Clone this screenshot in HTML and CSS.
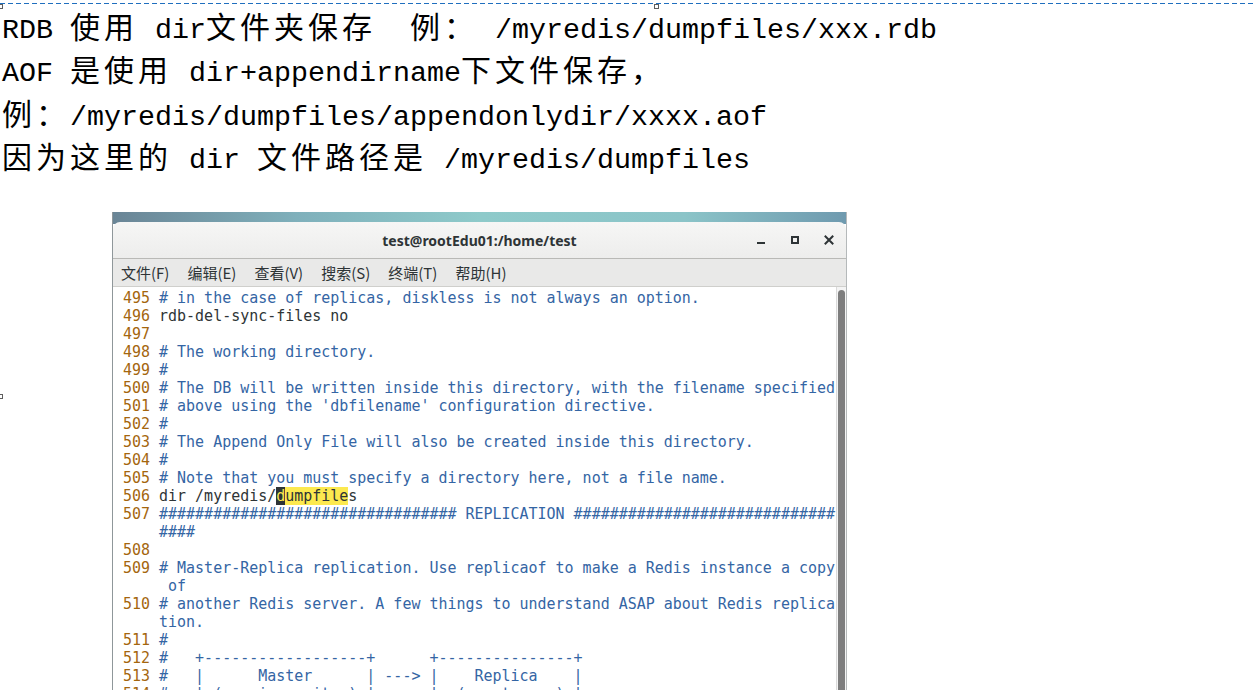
FILE: index.html
```html
<!DOCTYPE html>
<html lang="zh-CN">
<head>
<meta charset="utf-8">
<title>RDB / AOF dir</title>
<link rel="stylesheet" href="styles.css">
</head>
<body>
<div class="page">
  <div class="frame-line"></div>
  <span class="handle h-tl"></span>
  <span class="handle h-tm"></span>
  <span class="handle h-ml"></span>

  <div class="notes">
    <p>RDB <span class="cj">使用</span> dir<span class="cj">文件夹保存</span>  <span class="cj">例：</span> /myredis/dumpfiles/xxx.rdb</p>
    <p>AOF <span class="cj">是使用</span> dir+appendirname<span class="cj">下文件保存，</span></p>
    <p><span class="cj">例：</span>/myredis/dumpfiles/appendonlydir/xxxx.aof</p>
    <p><span class="cj">因为这里的</span> dir <span class="cj">文件路径是</span> /myredis/dumpfiles</p>
  </div>

  <div class="win">
    <div class="titlebar">
      <div></div>
      <div class="title">test@rootEdu01:/home/test</div>
      <div class="controls">
        <span class="ctl"><svg width="16" height="16" viewBox="0 0 16 16"><rect x="4" y="10" width="8" height="2" fill="#2e3436"/></svg></span>
        <span class="ctl"><svg width="16" height="16" viewBox="0 0 16 16"><rect x="5" y="5" width="6" height="6" fill="none" stroke="#2e3436" stroke-width="2"/></svg></span>
        <span class="ctl"><svg width="16" height="16" viewBox="0 0 16 16"><path d="M4.5 4.5 L11.5 11.5 M11.5 4.5 L4.5 11.5" stroke="#2e3436" stroke-width="2" stroke-linecap="square"/></svg></span>
      </div>
    </div>
    <div class="menubar">
      <span class="mi">文件(F)</span>
      <span class="mi">编辑(E)</span>
      <span class="mi">查看(V)</span>
      <span class="mi">搜索(S)</span>
      <span class="mi">终端(T)</span>
      <span class="mi">帮助(H)</span>
    </div>
    <div class="term">
      <div class="screen">
        <div class="row"><span class="ln">495 </span><span class="c"># in the case of replicas, diskless is not always an option.</span></div>
        <div class="row"><span class="ln">496 </span>rdb-del-sync-files no</div>
        <div class="row"><span class="ln">497 </span></div>
        <div class="row"><span class="ln">498 </span><span class="c"># The working directory.</span></div>
        <div class="row"><span class="ln">499 </span><span class="c">#</span></div>
        <div class="row"><span class="ln">500 </span><span class="c"># The DB will be written inside this directory, with the filename specified</span></div>
        <div class="row"><span class="ln">501 </span><span class="c"># above using the 'dbfilename' configuration directive.</span></div>
        <div class="row"><span class="ln">502 </span><span class="c">#</span></div>
        <div class="row"><span class="ln">503 </span><span class="c"># The Append Only File will also be created inside this directory.</span></div>
        <div class="row"><span class="ln">504 </span><span class="c">#</span></div>
        <div class="row"><span class="ln">505 </span><span class="c"># Note that you must specify a directory here, not a file name.</span></div>
        <div class="row"><span class="ln">506 </span>dir /myredis/<span class="cur">d</span><span class="hl">umpfile</span>s</div>
        <div class="row"><span class="ln">507 </span><span class="c">################################# REPLICATION #############################</span></div>
        <div class="row"><span class="ln">    </span><span class="c">####</span></div>
        <div class="row"><span class="ln">508 </span></div>
        <div class="row"><span class="ln">509 </span><span class="c"># Master-Replica replication. Use replicaof to make a Redis instance a copy</span></div>
        <div class="row"><span class="ln">    </span><span class="c"> of</span></div>
        <div class="row"><span class="ln">510 </span><span class="c"># another Redis server. A few things to understand ASAP about Redis replica</span></div>
        <div class="row"><span class="ln">    </span><span class="c">tion.</span></div>
        <div class="row"><span class="ln">511 </span><span class="c">#</span></div>
        <div class="row"><span class="ln">512 </span><span class="c">#   +------------------+      +---------------+</span></div>
        <div class="row"><span class="ln">513 </span><span class="c">#   |      Master      | ---&gt; |    Replica    |</span></div>
        <div class="row"><span class="ln">514 </span><span class="c">#   | (receive writes) |      |  (exact copy) |</span></div>
      </div>
      <div class="scroll"><div class="thumb"></div></div>
    </div>
  </div>
</div>
</body>
</html>
```

FILE: styles.css
```css
html, body {
  margin: 0;
  padding: 0;
  overflow: hidden;
  background: #ffffff;
}

body {
  width: 1254px;
  height: 690px;
}

.page {
  position: relative;
}

.frame-line {
  height: 1px;
  margin-top: 3px;
  background: repeating-linear-gradient(90deg, #1f6fbf 0 5px, transparent 5px 8px);
}

.handle {
  position: absolute;
  width: 3px;
  height: 3px;
  border: 1px solid #5e5e5e;
  background: #ffffff;
}

.h-tl { left: -2px; top: 1px; }
.h-tm { left: 654px; top: 1px; }
.h-ml { left: -2px; top: 391px; }

.notes {
  margin-top: 5px;
  padding-left: 2px;
  font-family: "Liberation Mono", "Noto Sans CJK SC", monospace;
  font-size: 28.33px;
  line-height: 43.33px;
  color: #000000;
}

.notes p {
  margin: 0;
  white-space: pre;
}

.cj {
  font-family: "Noto Sans CJK SC", sans-serif;
  font-size: 30px;
  letter-spacing: 4px;
  line-height: 0;
}

/* terminal window */
.win {
  margin: 30px 0 0 112px;
  width: 735px;
  box-sizing: border-box;
  padding-top: 10px;
  border-left: 1px solid #8f979a;
  border-right: 1px solid #b5b9ba;
  background: linear-gradient(90deg, #6a8596 0%, #7fb0bb 25%, #8ecaca 50%, #8bc4c8 78%, #6f9aaf 100%) top left / 100% 12px no-repeat;
}

.titlebar {
  display: grid;
  grid-template-columns: 1fr auto 1fr;
  align-items: center;
  height: 36px;
  background: linear-gradient(#f6f6f5, #ededec);
  border-radius: 7px 7px 0 0;
  border-bottom: 1px solid #b9b9b6;
}

.title {
  font-family: "Noto Sans", "Liberation Sans", sans-serif;
  font-weight: 700;
  font-size: 14px;
  color: #2e3436;
}

.controls {
  display: flex;
  justify-content: flex-end;
}

.ctl {
  width: 34px;
  height: 16px;
  display: flex;
  justify-content: center;
}

.menubar {
  display: flex;
  height: 27px;
  align-items: center;
  background: #e9e9e8;
  border-bottom: 1px solid #cfcfcc;
  font-family: "Noto Sans CJK SC", sans-serif;
  font-size: 15px;
  color: #2e3436;
}

.mi {
  padding: 0 9px;
}

.mi:first-child {
  padding-left: 8px;
}

.term {
  display: flex;
  background: #ffffff;
  height: 420px;
}

.screen {
  flex: 1;
  padding: 2px 0 0 10px;
  font-family: "DejaVu Sans Mono", monospace;
  font-size: 14.97px;
  line-height: 18px;
  color: #2e3436;
}

.row {
  height: 18px;
  white-space: pre;
}

.ln { color: #a4660e; }
.c { color: #3465a4; }
.cur { background: #2e3436; color: #fce94f; }
.hl { background: #fce94f; }

.scroll {
  width: 7px;
  border-left: 1px solid #dadada;
  background: #f4f4f4;
  padding: 3px 1px 0 1px;
}

.thumb {
  width: 7px;
  height: 100%;
  background: #7e7e7e;
  border-radius: 4px 4px 0 0;
}
```
